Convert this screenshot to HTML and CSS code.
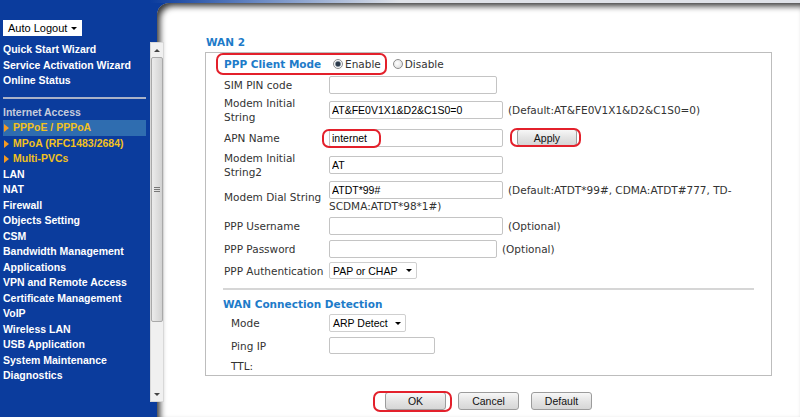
FILE: index.html
```html
<!DOCTYPE html>
<html lang="en">
<head>
    <meta charset="UTF-8">
    <meta name="viewport" content="width=device-width, initial-scale=1.0">
    <title>Internet Access - PPPoE / PPPoA</title>
    <link rel="stylesheet" href="styles.css">
</head>
<body>
<div class="frame">
    <div class="menu">
        <div class="logout">
            <span class="logout-select">Auto Logout<i class="caret"></i></span>
        </div>
        <ul class="nav">
            <li>Quick Start Wizard</li>
            <li>Service Activation Wizard</li>
            <li>Online Status</li>
            <li class="sep"></li>
            <li class="group">Internet Access</li>
            <li class="sub active">PPPoE / PPPoA</li>
            <li class="sub">MPoA (RFC1483/2684)</li>
            <li class="sub">Multi-PVCs</li>
            <li>LAN</li>
            <li>NAT</li>
            <li>Firewall</li>
            <li>Objects Setting</li>
            <li>CSM</li>
            <li>Bandwidth Management</li>
            <li>Applications</li>
            <li>VPN and Remote Access</li>
            <li>Certificate Management</li>
            <li>VoIP</li>
            <li>Wireless LAN</li>
            <li>USB Application</li>
            <li>System Maintenance</li>
            <li>Diagnostics</li>
        </ul>
    </div>

    <div class="scrollbar">
        <span class="arrow up"></span>
        <span class="thumb"><i class="grip"></i></span>
        <span class="track"></span>
        <span class="arrow down"></span>
    </div>

    <div class="page">
        <h2 class="title">WAN 2</h2>
        <div class="panel">
            <div class="row h22">
                <span class="label strong">PPP Client Mode</span>
                <span class="choice"><i class="radio checked"></i>Enable</span>
                <span class="choice"><i class="radio"></i>Disable</span>
                <span class="mark mark-mode"></span>
            </div>
            <div class="row h20">
                <span class="label">SIM PIN code</span>
                <span class="field"><input class="text short" type="text"></span>
            </div>
            <div class="row h29">
                <span class="label">Modem Initial<br>String</span>
                <span class="field"><input class="text" type="text" value="AT&amp;FE0V1X1&amp;D2&amp;C1S0=0"><span class="hint">(Default:AT&amp;FE0V1X1&amp;D2&amp;C1S0=0)</span></span>
            </div>
            <div class="row h27">
                <span class="label">APN Name</span>
                <span class="field">
                    <span class="marked"><input class="text" type="text" value="internet"><span class="mark mark-apn"></span></span><span class="marked apply"><button class="btn btn-apply">Apply</button><span class="mark mark-apply"></span></span>
                </span>
            </div>
            <div class="row h27">
                <span class="label">Modem Initial<br>String2</span>
                <span class="field"><input class="text" type="text" value="AT"></span>
            </div>
            <div class="row h38">
                <span class="label">Modem Dial String</span>
                <span class="field"><input class="text" type="text" value="ATDT*99#"><span class="hint">(Default:ATDT*99#, CDMA:ATDT#777, TD-</span><br>SCDMA:ATDT*98*1#)</span>
            </div>
            <div class="row h20">
                <span class="label">PPP Username</span>
                <span class="field"><input class="text" type="text"><span class="hint">(Optional)</span></span>
            </div>
            <div class="row h25">
                <span class="label">PPP Password</span>
                <span class="field"><input class="text short" type="password"><span class="hint">(Optional)</span></span>
            </div>
            <div class="row h19">
                <span class="label">PPP Authentication</span>
                <span class="field"><span class="select select-auth">PAP or CHAP<i class="caret"></i></span></span>
            </div>

            <div class="rule"></div>
            <h3 class="sub-title">WAN Connection Detection</h3>
            <div class="detect">
                <div class="row h20">
                    <span class="label">Mode</span>
                    <span class="field"><span class="select select-mode">ARP Detect<i class="caret"></i></span></span>
                </div>
                <div class="row h25">
                    <span class="label">Ping IP</span>
                    <span class="field"><input class="text ping" type="text"></span>
                </div>
                <div class="row h16">
                    <span class="label">TTL:</span>
                </div>
            </div>
        </div>

        <div class="actions">
            <span class="marked"><button class="btn btn-main">OK</button><span class="mark mark-ok"></span></span>
            <button class="btn btn-main">Cancel</button>
            <button class="btn btn-main">Default</button>
        </div>
    </div>
</div>
</body>
</html>
```

FILE: styles.css
```css
* {
    box-sizing: border-box;
}

body {
    margin: 0;
    width: 800px;
    height: 417px;
    overflow: hidden;
    background-color: #0b3c9d;
    font-family: "DejaVu Sans", Verdana, sans-serif;
    font-size: 10.5px;
    color: #333;
}

.frame {
    display: flex;
    height: 417px;
    background: linear-gradient(to right, #0b3c9d 150px, #6b8ac4 260px, #dfe2e8 400px) no-repeat 0 0 / 100% 3px;
}

/* left menu */

.menu {
    width: 150px;
    flex: none;
    padding: 20px 0 0 3px;
}

.logout-select {
    display: flex;
    align-items: center;
    justify-content: space-between;
    width: 79px;
    height: 16px;
    padding: 0 5px 0 5px;
    background-color: #fff;
    font-family: "Liberation Sans", Arial, sans-serif;
    font-size: 11px;
    color: #000;
}

.caret {
    width: 0;
    height: 0;
    border-left: 3px solid transparent;
    border-right: 3px solid transparent;
    border-top: 3px solid #000;
}

.nav {
    list-style: none;
    margin: 6px 0 0;
    padding: 0;
    width: 143px;
    font-family: "Liberation Sans", Arial, sans-serif;
    font-size: 10.5px;
    font-weight: bold;
    line-height: 15.5px;
    color: #fff;
    white-space: nowrap;
}

.nav .sep {
    height: 2px;
    margin: 8px 0 6px;
    background-color: #aab2c8;
}

.nav .group {
    color: #c5ccdc;
}

.nav .sub {
    padding-left: 1px;
    color: #f2c11e;
}

.nav .sub::before {
    content: "";
    display: inline-block;
    border-left: 5px solid #f59a23;
    border-top: 4px solid transparent;
    border-bottom: 4px solid transparent;
    margin-right: 4px;
    vertical-align: -1px;
}

.nav .active {
    background-color: #2f6db0;
}

/* menu frame scrollbar */

.scrollbar {
    flex: none;
    width: 14px;
    height: 360px;
    margin-top: 42px;
    position: relative;
    z-index: 1;
    display: flex;
    flex-direction: column;
    background-color: #f0f0f0;
    border: 1px solid #d8d8d8;
}

.arrow {
    flex: none;
    height: 14px;
    display: flex;
    align-items: center;
    justify-content: center;
}

.arrow::before {
    content: "";
    border-left: 3px solid transparent;
    border-right: 3px solid transparent;
}

.arrow.up::before {
    border-bottom: 3px solid #444;
}

.arrow.down::before {
    border-top: 3px solid #444;
}

.thumb {
    flex: none;
    height: 265px;
    display: flex;
    align-items: center;
    justify-content: center;
    background: linear-gradient(to right, #ececec, #d2d2d2);
    border: 1px solid #a9a9a9;
    border-radius: 2px;
}

.grip {
    width: 6px;
    height: 5px;
    background: repeating-linear-gradient(#777 0 1px, transparent 1px 2px);
}

.track {
    flex: 1;
}

/* main page */

.page {
    flex: 1;
    margin: 3px 0 0 -7px;
    padding: 33px 28px 0 48px;
    background-color: #fff;
    border-top-left-radius: 12px;
    box-shadow: inset 4px 4px 6px -1px rgba(0, 0, 0, 0.8);
}

.title {
    margin: 0;
    padding-left: 1px;
    font-size: 10.5px;
    line-height: 13px;
    font-weight: bold;
    color: #1d7bc9;
}

.panel {
    margin-top: 3px;
    padding-bottom: 1px;
    border: 1px solid #bdbdbd;
}

.row {
    display: flex;
    align-items: center;
    padding-left: 18px;
    position: relative;
}

.h16 { height: 16px; }
.h19 { height: 19px; }
.h20 { height: 20px; }
.h22 { height: 22px; }
.h25 { height: 25px; }
.h27 { height: 27px; }
.h29 { height: 29px; }
.h38 { height: 38px; }

.label {
    flex: none;
    width: 105px;
    line-height: 14px;
}

.strong {
    font-weight: bold;
    color: #1d7bc9;
}

.choice {
    display: inline-flex;
    align-items: center;
    margin-left: 4px;
}

.choice + .choice {
    margin-left: 12px;
}

.radio {
    width: 10px;
    height: 10px;
    margin-right: 2px;
    border: 1px solid #8c8c8c;
    border-radius: 50%;
    background: radial-gradient(circle at 40% 40%, #fff, #d8d8d8);
}

.radio.checked {
    background: radial-gradient(circle, #2b3a4a 0 2px, #8c98a4 2.6px, #fff 3.6px, #d8d8d8);
}

.field {
    flex: 1;
    line-height: 14px;
}

.text {
    width: 174px;
    height: 18px;
    margin: 0;
    padding: 0 2px;
    border: 1px solid #c4c4c4;
    border-radius: 2px;
    background-color: #fff;
    font-family: "Liberation Sans", Arial, sans-serif;
    font-size: 10.5px;
    color: #000;
}

.text.short {
    width: 168px;
}

.text.ping {
    width: 106px;
    height: 17px;
}

.hint {
    margin-left: 5px;
}

.select {
    display: inline-flex;
    align-items: center;
    justify-content: space-between;
    height: 17px;
    padding: 0 4px 0 3px;
    border: 1px solid #cfcfcf;
    border-radius: 2px;
    background-color: #fff;
    font-family: "Liberation Sans", Arial, sans-serif;
    font-size: 10.5px;
    color: #000;
    vertical-align: middle;
}

.select-auth {
    width: 88px;
}

.select-mode {
    width: 77px;
    height: 18px;
}

.rule {
    margin: 8px 17px 0;
    border-top: 2px solid #d6d6d6;
}

.sub-title {
    margin: 8px 0 0;
    padding-left: 17px;
    font-size: 10.5px;
    line-height: 13px;
    font-weight: bold;
    color: #1d7bc9;
}

.detect {
    margin-top: 2px;
}

.detect .row {
    padding-left: 25px;
}

.detect .label {
    width: 98px;
}

.btn {
    height: 18px;
    padding: 0;
    border: 1px solid #9c9c9c;
    border-radius: 3px;
    background: linear-gradient(#f7f7f7, #e4e4e4 50%, #d6d6d6);
    font-family: "Liberation Sans", Arial, sans-serif;
    font-size: 10.5px;
    color: #111;
}

.btn-apply {
    width: 60px;
    height: 17px;
}

.btn-main {
    width: 61px;
}

.actions {
    display: flex;
    justify-content: center;
    gap: 12px;
    width: 567px;
    margin-top: 16px;
}

/* red annotation rings */

.marked {
    position: relative;
    display: inline-block;
}

.apply {
    margin-left: 14px;
}

.mark {
    position: absolute;
    border: 2px solid #e3202b;
    border-radius: 7px;
}

.mark-mode {
    left: 10px;
    top: 0;
    width: 171px;
    height: 22px;
}

.mark-apn {
    left: -7px;
    top: 0;
    width: 59px;
    height: 19px;
}

.mark-apply {
    left: -7px;
    right: -4px;
    top: -1px;
    bottom: -1px;
}

.mark-ok {
    left: -12px;
    right: -6px;
    top: -1px;
    bottom: -2px;
}
```
